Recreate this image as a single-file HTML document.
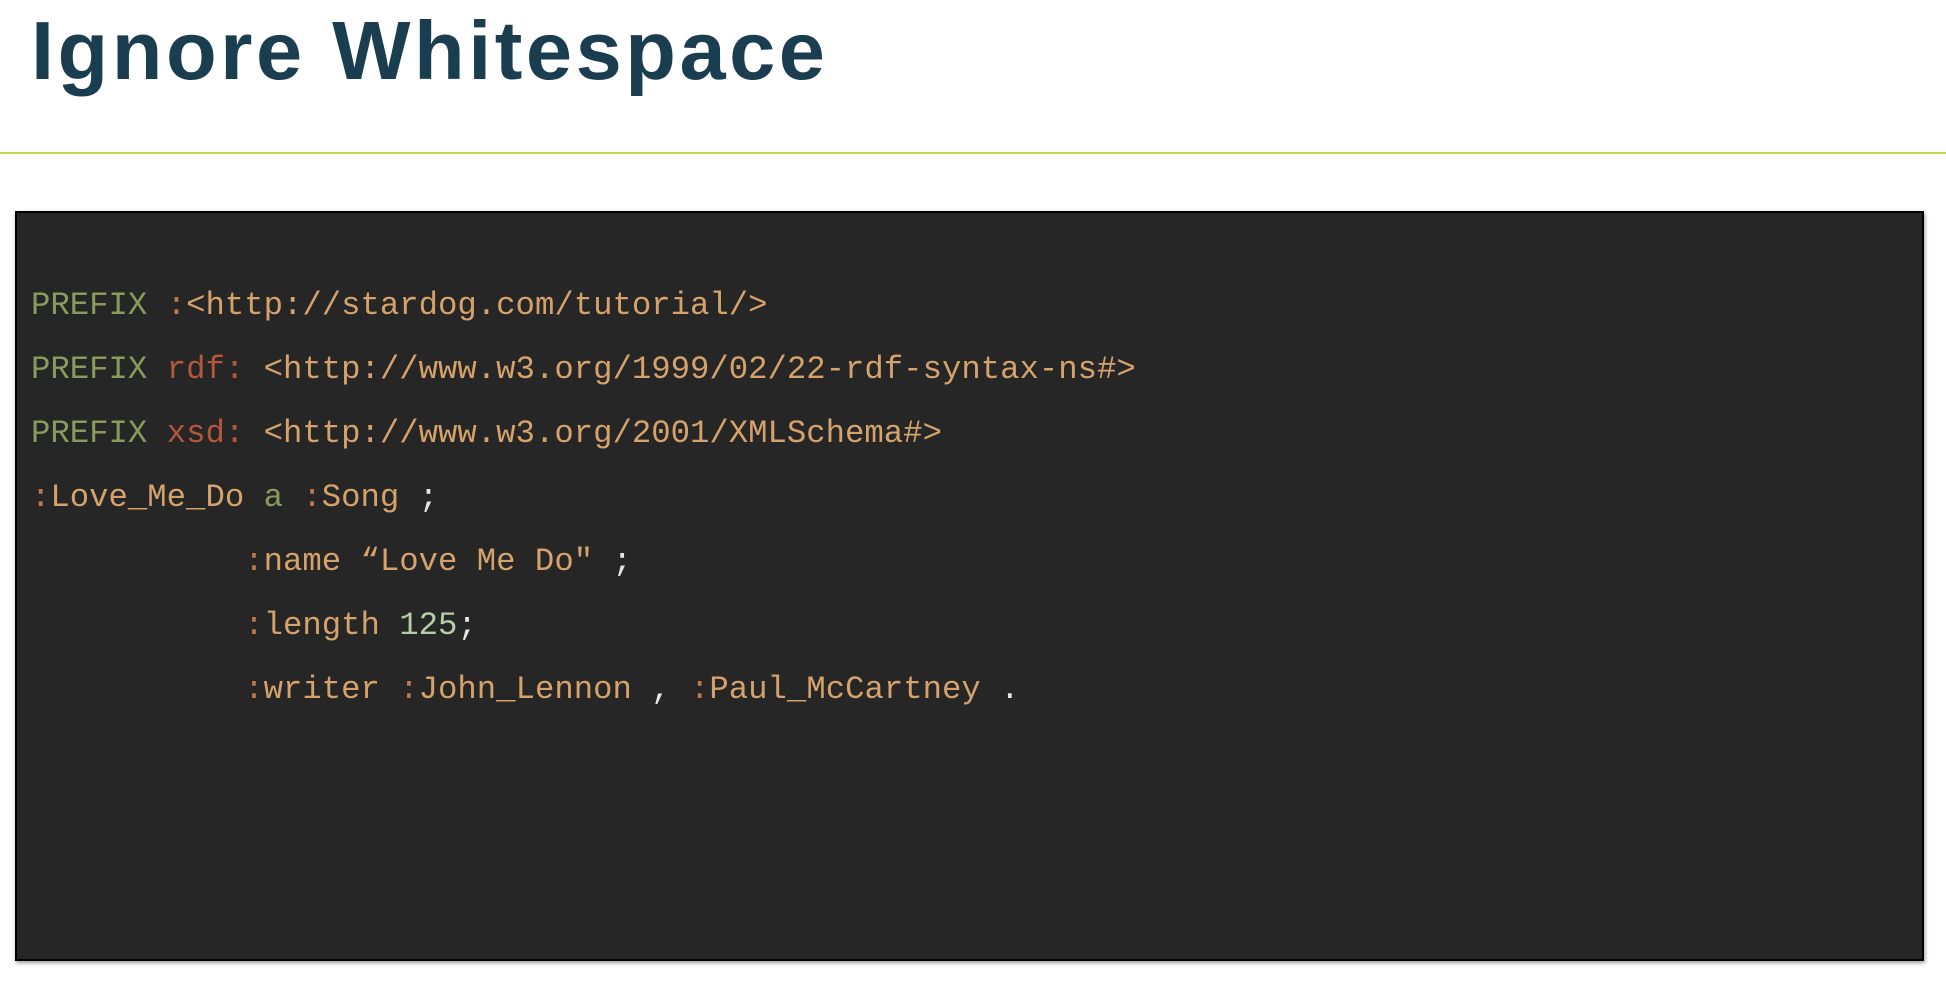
<!DOCTYPE html>
<html><head><meta charset="utf-8"><style>
html,body{margin:0;padding:0;background:#fff;width:1946px;height:988px;overflow:hidden}
h1{position:absolute;left:31px;top:9px;margin:0;font:bold 83px/1 "Liberation Sans",sans-serif;color:#1b3d50;letter-spacing:3.5px}
.line{position:absolute;left:0;top:152px;width:1946px;height:2px;background:#c5d84f}
.box{position:absolute;left:15px;top:211px;width:1905px;height:746px;background:#262626;border:2px solid #000;box-shadow:1px 2px 4px rgba(0,0,0,.4)}
pre{position:absolute;left:14px;top:61px;margin:0;font:32.3px/64px "Liberation Mono",monospace;color:#d4a26a}
.k{color:#8b9a5c}.c{color:#c0784a}.p{color:#b4573a}.w{color:#e6e6e6}.n{color:#b5cea8}
</style></head><body>
<h1>Ignore Whitespace</h1>
<div class="line"></div>
<div class="box"><pre><span class="k">PREFIX</span> <span class="c">:</span>&lt;http://stardog.com/tutorial/&gt;
<span class="k">PREFIX</span> <span class="p">rdf:</span> &lt;http://www.w3.org/1999/02/22-rdf-syntax-ns#&gt;
<span class="k">PREFIX</span> <span class="p">xsd:</span> &lt;http://www.w3.org/2001/XMLSchema#&gt;
<span class="c">:</span>Love_Me_Do <span class="k">a</span> <span class="c">:</span>Song <span class="w">;</span>
           <span class="c">:</span>name “Love Me Do" <span class="w">;</span>
           <span class="c">:</span>length <span class="n">125</span><span class="w">;</span>
           <span class="c">:</span>writer <span class="c">:</span>John_Lennon <span class="w">,</span> <span class="c">:</span>Paul_McCartney <span class="w">.</span></pre></div>
</body></html>
